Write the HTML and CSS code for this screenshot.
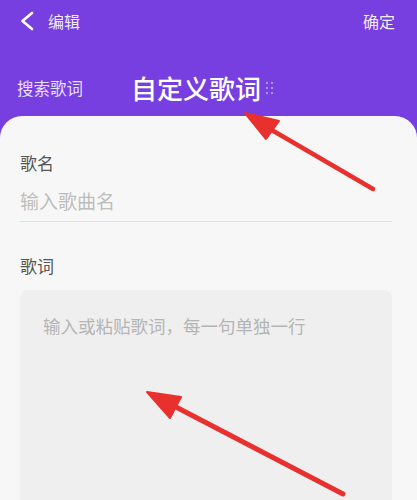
FILE: index.html
```html
<!DOCTYPE html>
<html lang="zh">
<head>
<meta charset="utf-8">
<title>自定义歌词</title>
<link rel="stylesheet" href="styles.css">
</head>
<body>
<div class="page">
  <header class="topbar">
    <div class="back">
      <svg class="chevron" width="14" height="20" viewBox="0 0 14 20"><path d="M12 2 L2.5 10 L12 18" fill="none" stroke="#fff" stroke-width="2.6" stroke-linecap="round" stroke-linejoin="round"/></svg>
      <span class="back-text">编辑</span>
    </div>
    <span class="confirm">确定</span>
  </header>
  <nav class="tabs">
    <span class="tab">搜索歌词</span>
    <span class="tab tab-active">自定义歌词</span>
    <span class="grip"><i></i><i></i><i></i><i></i><i></i><i></i></span>
  </nav>
  <main class="card">
    <div class="label">歌名</div>
    <div class="field">输入歌曲名</div>
    <div class="label label-lyrics">歌词</div>
    <div class="lyrics-box">
      <div class="lyrics-placeholder">输入或粘贴歌词，每一句单独一行</div>
    </div>
  </main>
  <svg class="arrows" width="417" height="500" viewBox="0 0 417 500">
    <g fill="#e8302e" stroke="#e8302e" stroke-linecap="round" stroke-linejoin="round">
      <line x1="270" y1="129" x2="373" y2="189" stroke-width="4.5"/>
      <polygon points="245,113 279,121 266,139" stroke-width="2"/>
      <line x1="174" y1="406" x2="343" y2="494" stroke-width="5"/>
      <polygon points="147,392 181,397 170,418" stroke-width="2"/>
    </g>
  </svg>
</div>
</body>
</html>
```
FILE: styles.css
```css
html, body {
  margin: 0;
  padding: 0;
}
body {
  width: 417px;
  height: 500px;
  overflow: hidden;
  background: #773ee0;
  font-family: "Noto Sans CJK SC", "Noto Sans", sans-serif;
}
.page {
  position: relative;
  width: 417px;
  height: 500px;
  overflow: hidden;
}
.topbar {
  height: 42px;
  display: flex;
  align-items: center;
  justify-content: space-between;
  padding: 0 22px 0 20px;
  color: rgba(255, 255, 255, 0.92);
}
.back {
  display: flex;
  align-items: center;
  gap: 14px;
}
.chevron {
  display: block;
}
.back-text, .confirm {
  font-size: 16px;
  line-height: 20px;
}
.tabs {
  height: 56px;
  padding: 18px 0 0 17px;
  display: flex;
  align-items: center;
}
.tab {
  font-size: 16.5px;
  line-height: 24px;
  color: rgba(255, 255, 255, 0.85);
}
.tab-active {
  margin-left: 48px;
  font-size: 26px;
  line-height: 34px;
  font-weight: 500;
  color: #fff;
}
.grip {
  margin-left: 5px;
  display: grid;
  grid-template-columns: 2px 2px;
  grid-auto-rows: 2px;
  column-gap: 3px;
  row-gap: 3px;
}
.grip i {
  display: block;
  width: 2px;
  height: 2px;
  border-radius: 50%;
  background: rgba(255, 255, 255, 0.6);
}
.card {
  background: #f7f7f7;
  border-radius: 22px 22px 0 0;
  padding: 35px 25px 0 20px;
  height: 400px;
}
.label {
  font-size: 17px;
  line-height: 24px;
  color: #555;
}
.field {
  margin-top: 13px;
  padding-bottom: 7px;
  border-bottom: 1px solid #e2e2e2;
  font-size: 19px;
  line-height: 26px;
  color: #bdbdbd;
}
.label-lyrics {
  margin-top: 32px;
}
.lyrics-box {
  margin-top: 12px;
  background: #efefef;
  border-radius: 8px;
  height: 260px;
  padding: 24px 23px 0 23px;
}
.lyrics-placeholder {
  font-size: 17.5px;
  line-height: 24px;
  color: #b5b5b5;
}
.arrows {
  position: absolute;
  left: 0;
  top: 0;
  pointer-events: none;
}
```
